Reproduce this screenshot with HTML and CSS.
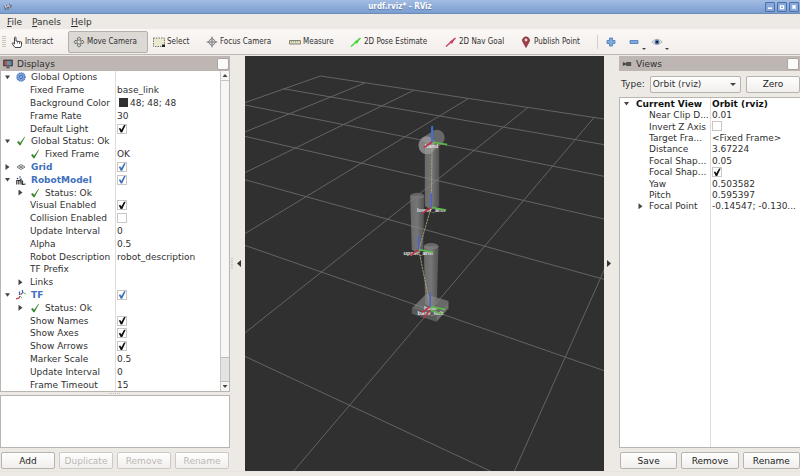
FILE: index.html
```html
<!DOCTYPE html>
<html lang="en">
<head>
<meta charset="utf-8">
<title>urdf.rviz* - RViz</title>
<link rel="stylesheet" href="styles.css">
</head>
<body>
<svg class="defs" aria-hidden="true">
  <symbol id="ok" viewBox="0 0 10 10"><path d="M1 6l2-1 1 2L8.500 .8 9 1 4.500 9.300H3.500z" fill="#37832a"/></symbol>
  <symbol id="gear" viewBox="0 0 10 10"><circle cx="5" cy="5" r="4" fill="#86aade" stroke="#4b7cc0" stroke-width="1.500" stroke-dasharray="1.200 .6"/><circle cx="5" cy="5" r="1.800" fill="none" stroke="#4472b5"/></symbol>
  <symbol id="grid" viewBox="0 0 10 10"><path d="M1 5l4-2.500L9 5 5 7.500zM3 3.800l4 2.500M7 3.800L3 6.300" fill="none" stroke="#555" stroke-width=".8"/></symbol>
  <symbol id="robot" viewBox="0 0 10 10"><path d="M.8 9.500V5.500h2v4M3.500 6l1.500-1.500V9.500M6.500 5.500v4l3-.5" fill="none" stroke="#333" stroke-width="1.200"/><circle cx="1.500" cy="3.500" r=".8" fill="#333"/><path d="M4 1v2.500" stroke="#4d72b8" stroke-width="1.200"/></symbol>
  <symbol id="tf" viewBox="0 0 10 10"><path d="M0 9l3-1 1-2M4.500 4.500L6.500 3" fill="none" stroke="#c43b55" stroke-width="1.300"/><path d="M4 6l2 2M7 2.500l3 1.500" stroke="#55cd66"/><path d="M3.500 5V1.500M6.500 3V0" stroke="#3865c4" stroke-width="1.200"/></symbol>
</svg>

<header class="titlebar">
  <svg class="ico" viewBox="0 0 10 10"><path d="M1 3l1.500 4 1-3 1.500 3 1.500-4 1 2 1-2" fill="none" stroke="#6d7686" stroke-width="1.500"/><path d="M1.500 2.500l1.500 3 2-2 2 1" fill="none" stroke="#ddd"/></svg>
  <h1>urdf.rviz* - RViz</h1>
  <div class="winbtns">
    <button aria-label="Minimize"><svg viewBox="0 0 10 10"><path d="M2.500 6.500h5" stroke="#fff" stroke-width="2"/></svg></button>
    <button aria-label="Maximize"><svg viewBox="0 0 10 10"><path d="M3 3.500h4v3.500H3z" fill="none" stroke="#fff" stroke-width="1.500"/></svg></button>
    <button aria-label="Close"><svg viewBox="0 0 10 10"><path d="M3 3l4 4M7 3L3 7" stroke="#fff" stroke-width="2"/></svg></button>
  </div>
</header>

<nav class="menubar">
  <button><u>F</u>ile</button><button><u>P</u>anels</button><button><u>H</u>elp</button>
</nav>

<div class="toolbar">
  <span class="grip"></span>
  <button class="t1"><svg class="tico" viewBox="0 0 12 12"><path d="M3.500 8V1.500q.8-1 1.500 0V5l5.500 1v3.500L9.500 11.500H4L1 7.500l1-.8 1.500 1.300" fill="#fff" stroke="#444"/><path d="M6.500 5.500v2M8.500 6v2" stroke="#777"/></svg>Interact</button>
  <button class="t2 active"><svg class="tico" viewBox="0 0 12 12"><path d="M6 .8l2 2H7v2.200h2.200V4l2 2-2 2V7H7v2.200h1l-2 2-2-2h1V7H2.800v1l-2-2 2-2v1H5V2.800H4z" fill="#ddd" stroke="#555" stroke-width=".8"/></svg>Move Camera</button>
  <button class="t3"><svg class="tico" viewBox="0 0 12 12"><path d="M.5 2h11v8.500H.5z" fill="#e9e9cd" stroke="#777" stroke-dasharray="1.500 1"/><path d="M9 8.500h3V11H9z" fill="#222"/></svg>Select</button>
  <button class="t4"><svg class="tico" viewBox="0 0 12 12"><circle cx="6" cy="6" r="3" fill="#ddd" stroke="#888"/><path d="M6 0l1.300 3H4.700zM6 12l1.300-3H4.700zM0 6l3-1.300v2.600zM12 6L9 4.700v2.600z" fill="#888"/><path d="M6 4v4M4 6h4" stroke="#777"/></svg>Focus Camera</button>
  <button class="t5"><svg class="tico" viewBox="0 0 12 12"><path d="M.5 4.500h11v3.500H.5z" fill="#dedfc2" stroke="#858575"/><path d="M2.500 4.500v2M4.500 4.500v1.500M6.500 4.500v2M8.500 4.500v1.500" stroke="#858575" stroke-width=".6"/></svg>Measure</button>
  <button class="t6"><svg class="tico" viewBox="0 0 12 12"><path d="M1 10.500L10.500 2" stroke="#42d839" stroke-width="1.500"/><path d="M4.500 5.800L10.500 1.800 7 8z" fill="#42d839"/></svg>2D Pose Estimate</button>
  <button class="t7"><svg class="tico" viewBox="0 0 12 12"><path d="M1 10.500L10.500 2" stroke="#c5446d" stroke-width="1.500"/><path d="M4.500 5.800L10.500 1.800 7 8z" fill="#c5446d"/></svg>2D Nav Goal</button>
  <button class="t8"><svg class="tico" viewBox="0 0 12 12"><path d="M6 11.500L3.200 6.500a3.500 3.500 0 1 1 5.600 0z" fill="#a33c49" stroke="#7c2c37" stroke-width=".7"/><circle cx="6" cy="4" r="1.400" fill="#f0dcdc"/></svg>Publish Point</button>
  <span class="sep"></span>
  <button class="t9" aria-label="Add tool"><svg class="tico" viewBox="0 0 12 12"><path d="M4.500 2h3v2.500H10v3H7.500V10h-3V7.500H2v-3h2.500z" fill="#80a9dc" stroke="#4879b5" stroke-width=".8"/></svg></button>
  <button class="t10" aria-label="Remove tool"><svg class="tico" viewBox="0 0 12 12"><path d="M2 4.500h8v3H2z" fill="#80a9dc" stroke="#4879b5" stroke-width=".8"/></svg><i class="drop"></i></button>
  <button class="t11" aria-label="Visibility"><svg class="tico" viewBox="0 0 12 12"><path d="M.8 6Q6 .5 11.200 6 6 11 .8 6z" fill="#eee" stroke="#aaa" stroke-width=".8"/><circle cx="6" cy="6" r="2.500" fill="#5e82b5"/><circle cx="6" cy="6" r="1.300" fill="#162746"/></svg><i class="drop"></i></button>
</div>

<main class="work">
  <section class="dock left">
    <header class="dockhead"><svg class="ico" viewBox="0 0 12 11"><path d="M.8.8h10.400v7H.8z" fill="#555" stroke="#333"/><path d="M2 2h3v5H2z" fill="#ca4665"/><path d="M5 2h2v5H5z" fill="#57b576"/><path d="M7 2h3v5H7z" fill="#6385c7"/><path d="M4 10h4M6 8v2" stroke="#333"/></svg><h2>Displays</h2><button class="float" aria-label="Float panel"></button></header>
    <div class="scroller">
      <table class="props displays">
        <tbody>
        <tr class="l0 group"><th><i class="open"></i><svg class="ico"><use href="#gear"/></svg>Global Options</th><td></td></tr>
        <tr class="l1"><th>Fixed Frame</th><td>base_link</td></tr>
        <tr class="l1"><th>Background Color</th><td><span class="swatch"></span>48; 48; 48</td></tr>
        <tr class="l1"><th>Frame Rate</th><td>30</td></tr>
        <tr class="l1"><th><label for="c1">Default Light</label></th><td><input type="checkbox" id="c1" checked></td></tr>
        <tr class="l0"><th><i class="open"></i><svg class="ico"><use href="#ok"/></svg>Global Status: Ok</th><td></td></tr>
        <tr class="l1 status"><th><i></i><svg class="ico"><use href="#ok"/></svg>Fixed Frame</th><td>OK</td></tr>
        <tr class="l0 name"><th><i class="closed"></i><svg class="ico"><use href="#grid"/></svg><label for="c2">Grid</label></th><td><input type="checkbox" id="c2" checked></td></tr>
        <tr class="l0 name"><th><i class="open"></i><svg class="ico"><use href="#robot"/></svg><label for="c3">RobotModel</label></th><td><input type="checkbox" id="c3" checked></td></tr>
        <tr class="l1 status"><th><i class="closed"></i><svg class="ico"><use href="#ok"/></svg>Status: Ok</th><td></td></tr>
        <tr class="l1"><th><label for="c4">Visual Enabled</label></th><td><input type="checkbox" id="c4" checked></td></tr>
        <tr class="l1"><th><label for="c5">Collision Enabled</label></th><td><input type="checkbox" id="c5"></td></tr>
        <tr class="l1"><th>Update Interval</th><td>0</td></tr>
        <tr class="l1"><th>Alpha</th><td>0.5</td></tr>
        <tr class="l1"><th>Robot Description</th><td>robot_description</td></tr>
        <tr class="l1"><th>TF Prefix</th><td></td></tr>
        <tr class="l1 branch"><th><i class="closed"></i>Links</th><td></td></tr>
        <tr class="l0 name"><th><i class="open"></i><svg class="ico"><use href="#tf"/></svg><label for="c6">TF</label></th><td><input type="checkbox" id="c6" checked></td></tr>
        <tr class="l1 status"><th><i class="closed"></i><svg class="ico"><use href="#ok"/></svg>Status: Ok</th><td></td></tr>
        <tr class="l1"><th><label for="c7">Show Names</label></th><td><input type="checkbox" id="c7" checked></td></tr>
        <tr class="l1"><th><label for="c8">Show Axes</label></th><td><input type="checkbox" id="c8" checked></td></tr>
        <tr class="l1"><th><label for="c9">Show Arrows</label></th><td><input type="checkbox" id="c9" checked></td></tr>
        <tr class="l1"><th>Marker Scale</th><td>0.5</td></tr>
        <tr class="l1"><th>Update Interval</th><td>0</td></tr>
        <tr class="l1"><th>Frame Timeout</th><td>15</td></tr>
        </tbody>
      </table>
      <div class="scrollbar"><i class="up"></i><span class="track"></span><span class="thumb"></span><i class="down"></i></div>
    </div>
    <div class="hsplit"></div>
    <div class="desc"></div>
    <div class="actions"><button>Add</button><button disabled>Duplicate</button><button disabled>Remove</button><button disabled>Rename</button></div>
  </section>

  <div class="vsplit"><span class="dots"></span><button aria-label="Hide left panel"><i class="toleft"></i></button></div>

  <svg class="scene" viewBox="15 6 1078 1245" preserveAspectRatio="xMidYMid slice" role="img" aria-label="Robot arm">
    <defs>
      <linearGradient id="cyl"><stop offset="0" stop-color="#888" stop-opacity=".65"/><stop offset=".5" stop-color="#8d8d8d" stop-opacity=".75"/><stop offset="1" stop-color="#777" stop-opacity=".5"/></linearGradient>
      <g id="axes"><path d="M0 0l45 8" stroke="#5bb94b" stroke-width="5"/><path d="M0 0l-25 17" stroke="#bd3047" stroke-width="5"/><path d="M0 0v-42" stroke="#5064c4" stroke-width="5"/></g>
    </defs>
    <path class="floor" d="M242 66L1093 195M130 104L1093 272M15 153L1093 367M15 247L1093 495M15 377L1093 676M15 574L1093 950M15 907L755 1253M242 66L15 146M375 87L15 234M522 109L15 356M685 134L15 539M865 160L15 837M1063 190L160 1253M1093 648L823 1253"/>
    <path d="M516 763l42-42 68 20-36 42z" fill="#888" opacity=".65"/><path d="M516 763l74 20v20l-74-24z" fill="#777" opacity=".6"/><path d="M590 783l36-42v22l-36 40z" fill="#999" opacity=".6"/>
    <path d="M555 278h43v178q-21 18-43 0z" fill="url(#cyl)"/>
    <path d="M511 425h42l-3 162q-17 14-34 0z" fill="url(#cyl)"/><ellipse cx="532" cy="426" rx="21" ry="10" fill="#777" opacity=".7"/>
    <path d="M552 577h44l-5 172q-17 18-35 0z" fill="url(#cyl)"/><ellipse cx="574" cy="577" rx="22" ry="10" fill="#808080" opacity=".7"/>
    <path d="M545 253l38-24a23 24 0 0 1 24 40l-30 25z" fill="#777" opacity=".8"/><ellipse cx="561" cy="274" rx="25" ry="27" fill="#999" opacity=".8"/>
    <path d="M577 265l-3 195-37 128 34 168" fill="none" stroke="#b1a778" stroke-width="2.500" stroke-dasharray="8 2"/>
    <g class="frames"><text x="575" y="282">hand</text><text x="574" y="475">lower_arm</text><text x="535" y="602">upper_arm</text><text x="572" y="768">base</text><text x="572" y="784">base_link</text></g>
    <use href="#axes" x="577" y="264"/><path d="M577 262v-46" stroke="#3f6fd0" stroke-width="6"/>
    <use href="#axes" x="574" y="460"/><use href="#axes" x="536" y="587"/><use href="#axes" x="571" y="758"/><path d="M571 768l37 12" stroke="#5bb94b" stroke-width="4"/><path d="M571 768l-19 24" stroke="#bd3047" stroke-width="4"/>
  </svg>

  <div class="vsplit mirrored"><button aria-label="Hide right panel"><i class="toright"></i></button><span></span></div>

  <section class="dock right">
    <header class="dockhead"><svg class="ico" viewBox="0 0 12 11"><path d="M1 3l4 2V3h6v5H5V6L1 8z" fill="#444"/><path d="M5 3.500h5.500v4H5z" fill="#555"/></svg><h2>Views</h2><button class="float" aria-label="Float panel"></button></header>
    <div class="typerow"><label for="type">Type:</label><span class="pick"><select id="type"><option>Orbit (rviz)</option></select></span><button>Zero</button></div>
    <div class="viewbox">
      <table class="props views">
        <tbody>
        <tr class="l0 head"><th><i class="open"></i>Current View</th><td>Orbit (rviz)</td></tr>
        <tr class="l1"><th>Near Clip D...</th><td>0.01</td></tr>
        <tr class="l1"><th><label for="v1">Invert Z Axis</label></th><td><input type="checkbox" id="v1"></td></tr>
        <tr class="l1"><th>Target Fra...</th><td>&lt;Fixed Frame&gt;</td></tr>
        <tr class="l1"><th>Distance</th><td>3.67224</td></tr>
        <tr class="l1"><th>Focal Shap...</th><td>0.05</td></tr>
        <tr class="l1"><th><label for="v2">Focal Shap...</label></th><td><input type="checkbox" id="v2" checked></td></tr>
        <tr class="l1"><th>Yaw</th><td>0.503582</td></tr>
        <tr class="l1"><th>Pitch</th><td>0.595397</td></tr>
        <tr class="l1 branch"><th><i class="closed"></i>Focal Point</th><td>-0.14547; -0.130...</td></tr>
        </tbody>
      </table>
    </div>
    <div class="actions"><button>Save</button><button>Remove</button><button>Rename</button></div>
  </section>
</main>
<footer class="base"></footer>
</body>
</html>
```
FILE: styles.css
```css
* { box-sizing: border-box; }
body {
  margin: 0; height: 100vh; display: flex; flex-direction: column; overflow: hidden;
  background: #edeae6; color: #303030; font: 9px/12px "DejaVu Sans", sans-serif;
}
button, select, input { font: inherit; color: inherit; margin: 0; }
button { padding: 0; border: 0; background: none; white-space: nowrap; }
h1, h2 { margin: 0; font: inherit; }
.defs { display: none; }
.ico { width: 10px; height: 10px; flex: none; }

.titlebar {
  flex: none; height: 14px; display: flex; align-items: center; padding: 0 1px 0 3px;
  background: linear-gradient(#a2bce3, #7a9dd1); border-bottom: 1px solid #6c8bb9;
}
.titlebar h1 {
  flex: 1; text-align: center; color: #fff; text-shadow: 0 1px 1px #57749f;
  font: bold 8px/12px "DejaVu Sans Condensed", "DejaVu Sans", sans-serif; padding-left: 22px;
}
.winbtns { display: flex; gap: 2px; }
.winbtns button { width: 10px; height: 10px; border: 1px solid #4c6fa5; border-radius: 1px; background: #86a8dc; }
.winbtns svg { display: block; width: 8px; height: 8px; }

.menubar { flex: none; height: 15px; display: flex; gap: 10px; padding-left: 7px; align-items: center; }
.menubar u { text-underline-offset: 1px; }

.toolbar {
  flex: none; height: 26px; display: flex; align-items: center; padding-left: 2px;
  background: linear-gradient(#faf7f5, #f3eeeb); border-top: 1px solid #f8f6f4; border-bottom: 1px solid #bdb8b3;
  font: 8px/12px "DejaVu Sans Condensed", "DejaVu Sans", sans-serif;
}
.toolbar button { height: 22px; display: flex; align-items: center; gap: 2px; padding: 0 4px; border: 1px solid transparent; border-radius: 2px; flex: none; }
.toolbar .active { background: #dcd9d5; border-color: #b3afaa; }
.tico { width: 12px; height: 12px; flex: none; }
.grip { width: 4px; height: 12px; background: repeating-linear-gradient(#c9c5c1 0 1px, transparent 1px 2px); }
.t1 { width: 62px; }
.t2 { width: 80px; }
.t3 { width: 53px; }
.t4 { width: 83px; }
.t5 { width: 61px; }
.t6 { width: 95px; }
.t7 { width: 75px; }
.t8 { width: 82px; }
.sep { width: 1px; height: 14px; background: #d3cfcb; margin-right: 2px; }
.t9, .t10, .t11 { width: 23px; }
.drop { align-self: flex-end; flex: none; border: 2px solid transparent; border-top-color: #444; border-bottom: 0; margin-bottom: 2px; }

.work { flex: 1; min-height: 0; display: flex; padding-top: 1px; }
.dock { flex: none; display: flex; flex-direction: column; min-height: 0; }
.left { width: 230px; }
.right { width: 181px; }
.dockhead { flex: none; height: 15px; display: flex; align-items: center; gap: 4px; padding: 0 1px 0 3px; background: #bdb6b3; }
.dockhead h2 { flex: 1; }
.float { width: 12px; height: 12px; border: 1px solid #aaa5a1; border-radius: 2px; background: #fbfafa; }

.scroller { flex: 1; min-height: 0; display: flex; background: #fff; border: 1px solid #b9b5b1; border-top: 0; }
.props { display: block; flex: 1; min-width: 0; }
.props tbody { display: grid; height: 100%; }
.displays tbody { grid-template-rows: repeat(25, 1fr); }
.views tbody { grid-template-rows: repeat(10, 1fr); }
.props tr { display: grid; min-height: 0; }
.displays tr { grid-template-columns: 115px 1fr; }
.views tr { grid-template-columns: 91px 1fr; }
.props th, .props td { display: flex; align-items: center; padding: 0; min-height: 0; font-weight: normal; white-space: nowrap; text-align: left; overflow: hidden; }
.props th { border-right: 1px solid #dfdcda; }
.props td { padding-left: 1px; }
.props i { flex: none; width: 5px; height: 6px; margin-right: 9px; }
.open { background: #444; clip-path: polygon(0 20%, 100% 20%, 50% 80%); }
.closed { background: #444; clip-path: polygon(10% 0, 90% 50%, 10% 100%); }
.props .ico { margin-right: 5px; }
.displays .l0 th { padding-left: 4px; }
.displays .l0 i { margin-right: 7px; }
.displays .l0 .ico { margin-left: -1px; }
.displays .l1 th { padding-left: 29px; }
.displays .status th, .displays .branch th { padding-left: 17px; }
.displays .branch i { margin-right: 7px; }
.displays .status i { margin-right: 7px; }
.displays .name th { font-weight: bold; color: #3d71bd; }
.views .l0 th { padding-left: 4px; }
.views .head { color: #111; }
.views .head th, .views .head td { font-weight: bold; }
.views .open { margin-right: 7px; }
.views .l1 th { padding-left: 29px; }
.views .branch th { padding-left: 18px; }
.views .branch i { margin-right: 6px; }
.props input {
  appearance: none; width: 10px; height: 10px; border: 1px solid #c9c6c3; background: #fff;
  display: grid; place-items: center; color: #111;
}
.props input:checked::before { content: ""; width: 8px; height: 8px; background: currentColor; clip-path: polygon(10% 50%, 28% 42%, 42% 64%, 76% 4%, 96% 4%, 52% 98%, 34% 98%); }
.props .name input { color: #3d71bd; }
.swatch { width: 9px; height: 9px; background: #303030; margin: 0 2px; }

.scrollbar { width: 9px; display: flex; flex-direction: column; align-items: center; border-left: 1px solid #c9c5c2; background: #f8f6f5; }
.scrollbar i { flex: none; width: 5px; height: 3px; margin: 3px 0; background: #444; }
.up { clip-path: polygon(50% 0, 100% 100%, 0 100%); }
.down { clip-path: polygon(0 0, 100% 0, 50% 100%); }
.track { flex: 279; align-self: stretch; border-top: 1px solid #c9c5c2; }
.thumb { flex: 23; align-self: stretch; background: #e2e3e2; border: solid #c0bcb9; border-width: 1px 0; }
.hsplit { flex: none; height: 3px; width: 12px; margin: 0 auto; background: repeating-linear-gradient(90deg, #c4c0bc 0 1px, transparent 1px 2px) 0 1px / 100% 1px no-repeat; }
.desc { flex: none; height: 53px; background: #fff; border: 1px solid #b9b5b1; }
.actions { flex: none; display: flex; gap: 4px; padding: 4px 1px 2px; height: 23px; }
.actions button, .typerow button {
  flex: 1; border: 1px solid #b8b3ae; border-radius: 2px; background: linear-gradient(#fefefe, #f1efed); color: #222;
}
.actions button:disabled { color: #bbb7b3; border-color: #cdc9c5; }

.vsplit { flex: none; width: 15px; display: flex; align-items: center; justify-content: space-between; padding: 0 4px 0 1px; }
.vsplit button { display: flex; align-items: center; }
.vsplit i { width: 4px; height: 7px; background: #333; }
.mirrored { padding: 0 3px; }
.dots { width: 2px; height: 12px; background: repeating-linear-gradient(#c9c5c1 0 1px, transparent 1px 2px); }
.toleft { clip-path: polygon(100% 0, 100% 100%, 0 50%); }
.toright { clip-path: polygon(0 0, 100% 50%, 0 100%); }
.right .actions { padding-right: 0; }
.scene { flex: 1; min-width: 0; height: 100%; background: #303030; }
.floor { fill: none; stroke: #646464; stroke-width: 3; }
.frames { fill: #e4e4e4; font: bold 17px "Liberation Sans", sans-serif; text-anchor: middle; }

.typerow { flex: none; height: 26px; display: flex; align-items: center; gap: 5px; padding: 0 0 0 2px; }
.typerow button { flex: none; width: 54px; height: 17px; }
.pick { flex: 1; display: flex; position: relative; }
.pick select { flex: 1; width: 100%; height: 17px; appearance: none; padding: 0 2px; border: 1px solid #b8b3ae; border-radius: 2px; background: linear-gradient(#fefefe, #f1efed); }
.pick::after { content: ""; position: absolute; right: 5px; top: 7px; border: 3px solid transparent; border-top-color: #444; border-bottom: 0; }
.viewbox { flex: 1; min-height: 0; display: flex; background: linear-gradient(#dfdcda, #dfdcda) 90px 0 / 1px 100% no-repeat #fff; border: solid #b9b5b1; border-width: 1px 0 1px 1px; }
.views { height: 114px; }
.base { flex: none; height: 5px; border-top: 1px solid #e8e5e1; }
```
